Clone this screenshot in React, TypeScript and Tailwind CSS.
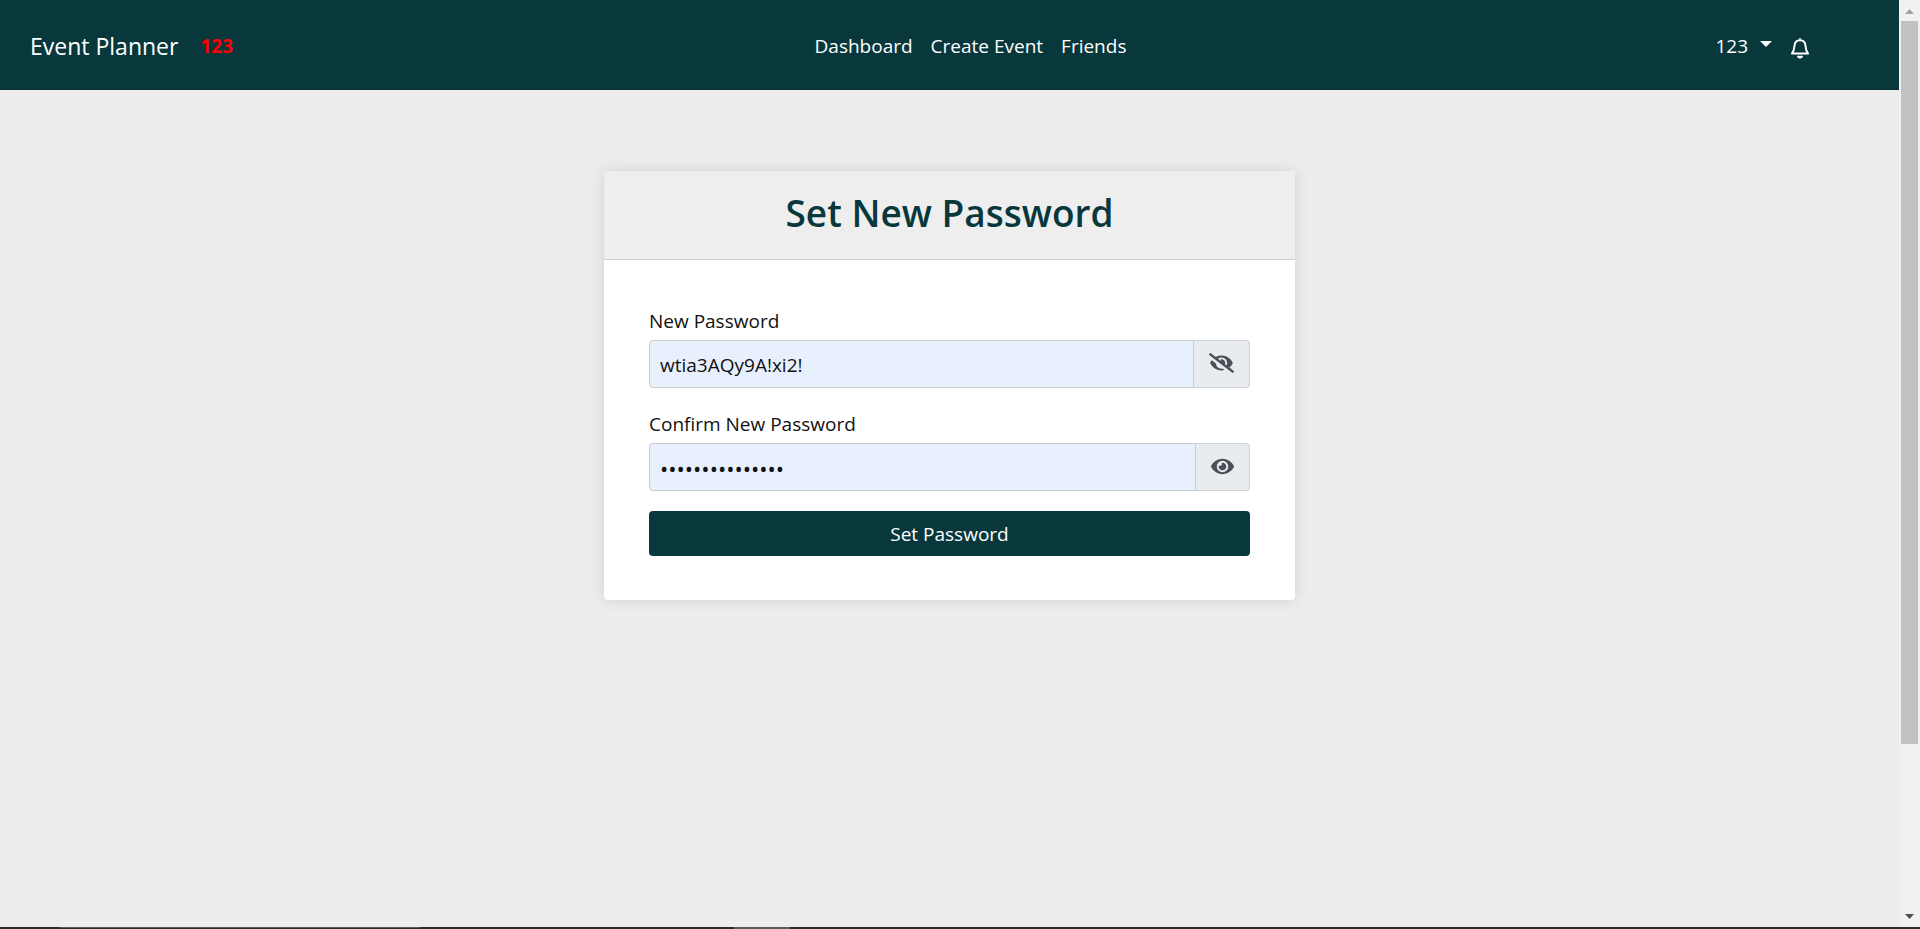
import { useState } from "react";
import { FaEye, FaEyeSlash } from "react-icons/fa";

const navLinks = ["Dashboard", "Create Event", "Friends"];

function BellIcon() {
  return (
    <svg viewBox="0 0 20 22" className="mt-1 h-[22px] w-5" fill="none" aria-hidden="true">
      <path
        d="M2 16.500C3.800 14.500 4.200 12.500 4.400 9.300C4.600 5.400 6.700 3.200 10 3.200C13.300 3.200 15.400 5.400 15.600 9.300C15.800 12.500 16.200 14.500 18 16.500Z"
        stroke="currentColor"
        strokeWidth="2"
        strokeLinejoin="round"
      />
      <path d="M8.800 2.500a1.200 1.200 0 0 1 2.400 0zM7 18.800h6a3 2.600 0 0 1-6 0z" fill="currentColor" />
    </svg>
  );
}

function Navbar() {
  return (
    <header className="grid h-[90px] grid-cols-[1fr_auto_1fr] items-center border-b border-[#062c30] bg-[#08383c] px-[30px] pt-[3px] text-white">
      <div className="flex items-center gap-[22px]">
        <a href="#" className="text-[23px]">Event Planner</a>
        <span className="text-[19px] font-bold text-[#ff0000]">123</span>
      </div>
      <nav className="ml-[42px] flex gap-[18px] text-[19px]">
        {navLinks.map((label) => (
          <a key={label} href="#">{label}</a>
        ))}
      </nav>
      <div className="mr-[59px] flex items-center justify-end gap-[18px]">
        <button type="button" className="flex items-center gap-3 text-[19px]">
          123
          <svg viewBox="0 0 12 6" className="mb-1 h-[6px] w-3" fill="currentColor" aria-hidden="true">
            <path d="M0 0h12L6 6z" />
          </svg>
        </button>
        <button type="button" aria-label="Notifications">
          <BellIcon />
        </button>
      </div>
    </header>
  );
}

type FieldProps = { id: string; label: string; initial: string; visible: boolean };

function PasswordField({ id, label, initial, visible }: FieldProps) {
  const [value, setValue] = useState(initial);
  const [shown, setShown] = useState(visible);
  return (
    <div className="flex flex-col gap-[3px]">
      <label htmlFor={id} className="text-[19px] leading-8 text-[#111111]">{label}</label>
      <div className="flex h-12">
        <input
          id={id}
          type={shown ? "text" : "password"}
          value={value}
          onChange={(event) => setValue(event.target.value)}
          className={`min-w-0 flex-1 rounded-l border border-[#c9cacc] bg-[#e8f0fe] px-[10px] pt-[2px] text-[#111111] outline-none ${shown ? "text-[19px]" : "text-[22px]"}`}
        />
        <button
          type="button"
          aria-label={shown ? "Hide password" : "Show password"}
          onClick={() => setShown(!shown)}
          className="-ml-px rounded-r border border-l-[#c9cacc] border-[#ced4da] bg-[#e9ecef] px-[15px] pb-[2px] text-[#495057]"
        >
          {shown ? <FaEyeSlash className="h-5 w-[25px]" /> : <FaEye className="h-[23px] w-[23px]" />}
        </button>
      </div>
    </div>
  );
}

function Scrollbar() {
  return (
    <div aria-hidden="true" className="flex w-[21px] flex-col items-center bg-[#f1f1f1]">
      <svg viewBox="0 0 21 21" className="h-[21px] w-[21px]">
        <path d="M6 14h9l-4.500-5z" fill="#a3a3a3" />
      </svg>
      <div className="w-[17px] grow-[723] bg-[#c1c1c1]" />
      <div className="grow-[162]" />
      <svg viewBox="0 0 21 21" className="h-[21px] w-[21px]">
        <path d="M6 8h9l-4.500 5z" fill="#505050" />
      </svg>
    </div>
  );
}

export default function App() {
  return (
    <div className="flex min-h-screen flex-col bg-[#eeeced] font-['Open_Sans','Noto_Sans',sans-serif]">
      <div className="flex flex-1">
        <div className="min-w-0 flex-1">
          <Navbar />
          <main className="px-4 pt-[81px]">
            <section className="mx-auto max-w-[691px] overflow-hidden rounded bg-white shadow-[0_0_16px_rgba(0,0,0,0.12)]">
              <div className="border-b border-[#cfcfcf] bg-[#eeeeee] pt-[18px] pb-[22px]">
                <h1 className="text-center text-[37px] leading-12 font-semibold text-[#08383c]">Set New Password</h1>
              </div>
              <form className="flex flex-col gap-5 px-[45px] pt-[45px] pb-11" onSubmit={(event) => event.preventDefault()}>
                <PasswordField id="new-password" label="New Password" initial="wtia3AQy9A!xi2!" visible />
                <PasswordField id="confirm-password" label="Confirm New Password" initial="wtia3AQy9A!xi2!" visible={false} />
                <button type="submit" className="h-[45px] rounded bg-[#08383c] pt-[2px] text-[19px] text-white">Set Password</button>
              </form>
            </section>
          </main>
        </div>
        <Scrollbar />
      </div>
      <div aria-hidden="true" className="flex h-[2px] bg-[#2d2b2e]">
        <div className="ml-[60px] w-[360px] border-t border-[#5c5a5d]" />
        <div className="ml-[314px] w-14 bg-[#5c5a5d]" />
      </div>
    </div>
  );
}
